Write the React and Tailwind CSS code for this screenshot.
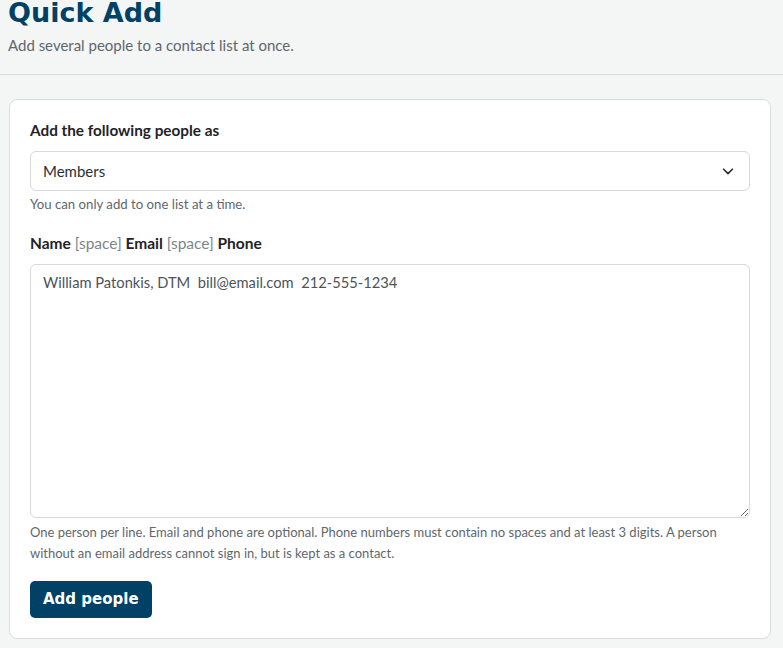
import React from 'react';

const body = { fontFamily: '"Lato", "Liberation Sans", sans-serif' };
const display = { fontFamily: '"DejaVu Sans", "Liberation Sans", sans-serif' };

const App = () => {
  return (
    <div className="min-h-screen bg-[#f4f5f5]" style={body}>
      {/* Page header */}
      <header className="border-b border-[#dcdddd] px-2 pb-[19px]">
        <h1 className="text-[27px] font-bold leading-[26px] text-[#004165]" style={display}>
          Quick Add
        </h1>
        <p className="mt-[9px] text-[15px] leading-[20px] text-[#5f676c]">
          Add several people to a contact list at once.
        </p>
      </header>

      <main className="pl-[9px] pr-[12px] pt-[24px] pb-6">
        <div className="rounded-lg border border-[#dcdcdc] bg-white p-5">
          <label className="block text-[15.3px] font-bold leading-[20px] text-[#1f2326]">
            Add the following people as
          </label>
          <div className="relative mt-[11px]">
            <select
              defaultValue="members"
              className="h-[40px] w-full appearance-none rounded-md border border-[#d9d9d9] bg-white pl-3 pr-10 text-[15px] text-[#2b2f33] outline-none"
              style={body}
            >
              <option value="members">Members</option>
              <option value="guests">Guests</option>
              <option value="officers">Officers</option>
            </select>
            <svg
              className="pointer-events-none absolute right-[15px] top-1/2 h-[14px] w-[14px] -translate-y-1/2 text-[#333]"
              viewBox="0 0 16 16"
              fill="none"
              stroke="currentColor"
              strokeWidth="2"
              strokeLinecap="round"
              strokeLinejoin="round"
            >
              <path d="M3 6l5 5 5-5" />
            </svg>
          </div>
          <p className="mt-[4px] text-[13.2px] leading-[18px] text-[#5f676c]">
            You can only add to one list at a time.
          </p>

          <label className="mt-[20px] block text-[15.5px] font-bold leading-[20px] text-[#1f2326]">
            Name <span className="font-normal text-[#7d858a]">[space]</span> Email{' '}
            <span className="font-normal text-[#7d858a]">[space]</span> Phone
          </label>
          <textarea
            defaultValue={'William Patonkis, DTM  bill@email.com  212-555-1234'}
            className="mt-[11px] block h-[254px] w-full rounded-md border border-[#d9d9d9] bg-white px-3 py-[6px] text-[14.7px] leading-[22px] text-[#4d5459] outline-none"
            style={{ ...body, whiteSpace: 'pre-wrap' }}
          />
          <p className="mt-[4px] text-[13px] leading-[21px] text-[#5f676c]">
            One person per line. Email and phone are optional. Phone numbers must contain no spaces and at least 3 digits. A person
            without an email address cannot sign in, but is kept as a contact.
          </p>

          <button
            className="mt-[17px] h-[37px] rounded-[5px] bg-[#004165] px-[13px] text-[15px] font-bold text-white"
            style={display}
          >
            Add people
          </button>
        </div>
      </main>
    </div>
  );
};

export default App;
